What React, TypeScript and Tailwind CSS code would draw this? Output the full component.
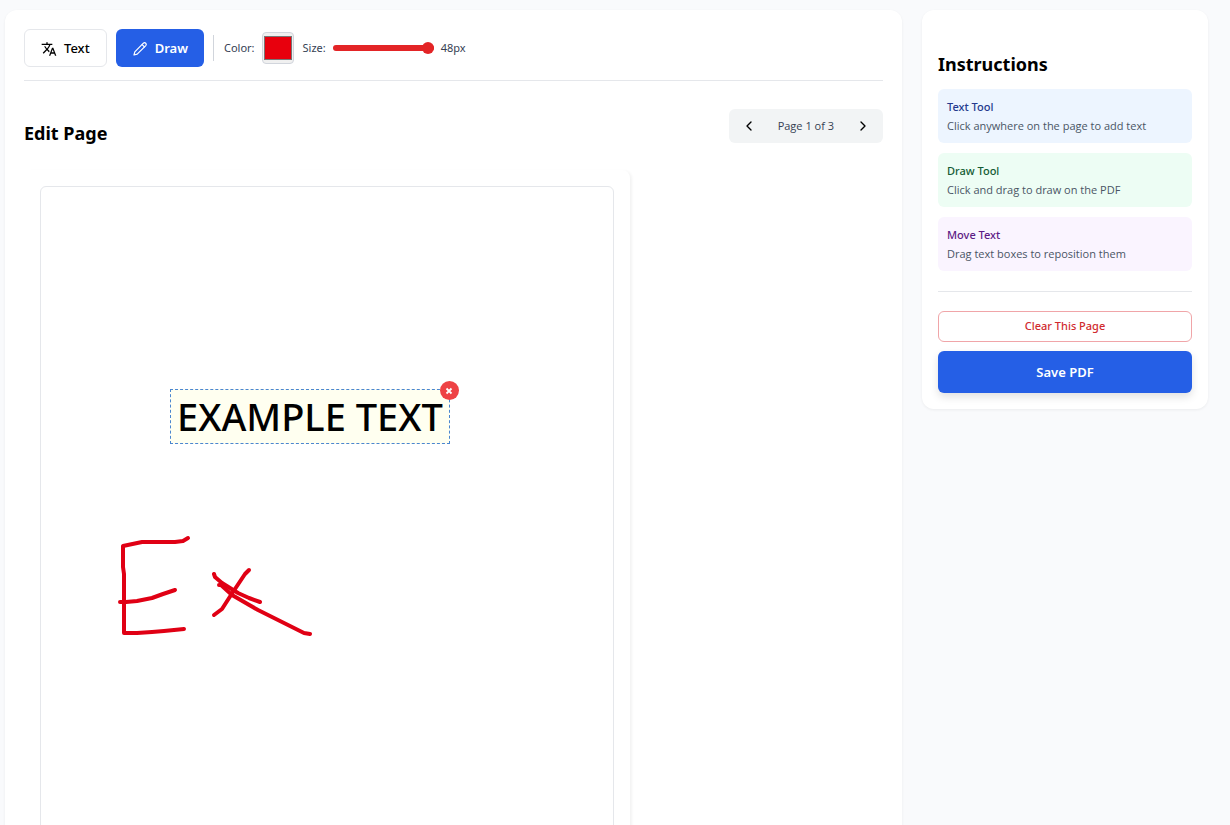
import { useState } from "react";
import type { ReactNode } from "react";
import { ChevronLeft, ChevronRight } from "lucide-react";
import { MdTranslate } from "react-icons/md";

type Note = { title: string; body: string; box: string; heading: string };

const NOTES: Note[] = [
  { title: "Text Tool", body: "Click anywhere on the page to add text", box: "bg-[#edf5ff]", heading: "text-[#263a8e]" },
  { title: "Draw Tool", body: "Click and drag to draw on the PDF", box: "bg-[#edfdf4]", heading: "text-[#145c35]" },
  { title: "Move Text", body: "Drag text boxes to reposition them", box: "bg-[#faf4ff]", heading: "text-[#5d1c86]" },
];

function PencilIcon() {
  return (
    <svg viewBox="0 0 16 16" className="size-4" fill="none" stroke="currentColor" strokeWidth="1.2" strokeLinecap="round" strokeLinejoin="round" aria-hidden="true">
      <path d="M11.4 2.2a1.7 1.7 0 0 1 2.4 2.4L5.2 13.2l-3.2.8.8-3.2z" />
      <path d="M10.2 3.6l2.2 2.2" />
    </svg>
  );
}

function Toolbar() {
  const [color, setColor] = useState("#e8000d");
  const [size, setSize] = useState(48);
  return (
    <div className="flex flex-wrap items-center border-b border-gray-200 pb-[13px] text-[11px] text-gray-700">
      <button type="button" className="flex h-[38px] items-center gap-[7px] rounded-md border border-gray-200 bg-white px-4 pt-0.5 text-[13px] font-medium text-black">
        <MdTranslate className="size-4" />
        Text
      </button>
      <button type="button" className="ml-[9px] flex h-[38px] items-center gap-[7px] rounded-md bg-[#255fe6] px-4 pt-0.5 text-[13px] font-semibold text-white">
        <PencilIcon />
        Draw
      </button>
      <div className="ml-[9px] h-[26px] w-px bg-gray-300" />
      <label htmlFor="color" className="ml-2.5">Color:</label>
      <input
        id="color"
        type="color"
        value={color}
        onChange={(e) => setColor(e.target.value)}
        className="ml-[7px] size-8 cursor-pointer appearance-none rounded border border-gray-300 bg-[#f0f0f0] px-px py-[3px] [&::-webkit-color-swatch]:border-[#777] [&::-webkit-color-swatch-wrapper]:p-0"
      />
      <label htmlFor="size" className="ml-[9px]">Size:</label>
      <input
        id="size"
        type="range"
        min={8}
        max={48}
        value={size}
        onChange={(e) => setSize(Number(e.target.value))}
        className="ml-[7px] h-3 w-[101px] cursor-pointer appearance-none bg-transparent [&::-webkit-slider-runnable-track]:h-1.5 [&::-webkit-slider-runnable-track]:rounded-full [&::-webkit-slider-runnable-track]:bg-[#e32426] [&::-webkit-slider-thumb]:-mt-[3px] [&::-webkit-slider-thumb]:size-3 [&::-webkit-slider-thumb]:appearance-none [&::-webkit-slider-thumb]:rounded-full [&::-webkit-slider-thumb]:bg-[#e32426]"
      />
      <output htmlFor="size" className="ml-[7px]">{size}px</output>
    </div>
  );
}

function Strokes() {
  return (
    <svg viewBox="0 0 572 700" className="block h-[700px] w-full" fill="none" stroke="#e00014" strokeWidth="4" strokeLinecap="round" strokeLinejoin="round" role="img" aria-label="Drawing">
      <path d="M147 351 142 354 134 355H101L82 359V380L83 387V446H96L111 445 123 444 143 442" />
      <path d="M79 415H85L96 414 111 411 122 407 134 403" />
      <path d="M173 387 174 390 181 396 197 406 208 411 219 415" />
      <path d="M208 383 204 387 190 408 181 422 173 428" />
      <path d="M178 398H180L191 408 217 423 245 437 263 446 269 447" />
    </svg>
  );
}

function Pager({ children }: { children: ReactNode }) {
  return (
    <div className="flex h-[34px] items-center rounded-md bg-[#f2f4f5] px-3 text-[11px] text-gray-700">
      <button type="button" aria-label="Previous page" className="text-black">
        <ChevronLeft className="size-4" />
      </button>
      <span className="px-[21px] font-['Open_Sans','Noto_Sans',sans-serif]">{children}</span>
      <button type="button" aria-label="Next page" className="text-black">
        <ChevronRight className="size-4" />
      </button>
    </div>
  );
}

function Editor() {
  return (
    <main className="min-w-0 flex-1 rounded-xl bg-white px-[19px] pt-[19px] shadow-[0_1px_3px_rgba(0,0,0,0.06)]">
      <Toolbar />
      <div className="mt-7 flex items-start justify-between">
        <h1 className="pt-3 text-[18px] leading-6 font-bold text-black">Edit Page</h1>
        <Pager>Page 1 of 3</Pager>
      </div>
      <div className="mt-[25px] w-full max-w-[606px] rounded-lg px-4 pt-4 shadow-[2px_1px_3px_rgba(0,0,0,0.05)]">
        <div className="relative rounded-md border border-gray-200 bg-white">
          <Strokes />
          <div className="absolute top-[202px] left-[129px] border border-dashed border-[#4a86d0] bg-[#fffff0] px-1.5 text-[38px] leading-[53px] font-medium whitespace-nowrap text-black">
            EXAMPLE TEXT
            <button type="button" aria-label="Remove text" className="absolute -top-[9px] -right-[10px] flex size-[19px] items-center justify-center rounded-full bg-[#ee4245] text-white">
              <svg viewBox="0 0 8 8" className="size-2" stroke="currentColor" strokeWidth="1.8" aria-hidden="true">
                <path d="M1.5 1.5l5 5M6.5 1.5l-5 5" />
              </svg>
            </button>
          </div>
        </div>
      </div>
    </main>
  );
}

function Sidebar() {
  return (
    <aside className="w-[286px] shrink-0 rounded-xl bg-white px-4 pt-[42px] pb-4 shadow-[0_1px_3px_rgba(0,0,0,0.06)]">
      <h2 className="text-[18px] leading-6 font-bold text-black">Instructions</h2>
      <div className="mt-[13px] flex flex-col gap-2.5 border-b border-gray-200 pb-5 text-[11px] leading-[19px]">
        {NOTES.map((note) => (
          <section key={note.title} className={`rounded-md px-[9px] py-2 ${note.box}`}>
            <h3 className={`font-medium ${note.heading}`}>{note.title}</h3>
            <p className="font-['Open_Sans','Noto_Sans',sans-serif] text-gray-600">{note.body}</p>
          </section>
        ))}
      </div>
      <button type="button" className="mt-[19px] h-[31px] w-full rounded-md border border-[#f0a5a8] bg-white text-[11px] font-medium text-[#d02a2e]">
        Clear This Page
      </button>
      <button type="button" className="mt-[9px] h-[42px] w-full rounded-md bg-[#255fe6] pt-0.5 text-[13px] font-semibold text-white shadow-[0_4px_8px_rgba(0,0,0,0.12)]">
        Save PDF
      </button>
    </aside>
  );
}

export default function App() {
  return (
    <div className="h-screen overflow-hidden bg-[#f9fafc] font-['Noto_Sans','Open_Sans',sans-serif]">
      <div className="flex items-start gap-5 pt-2.5 pr-[22px] pl-[5px]">
        <Editor />
        <Sidebar />
      </div>
    </div>
  );
}
